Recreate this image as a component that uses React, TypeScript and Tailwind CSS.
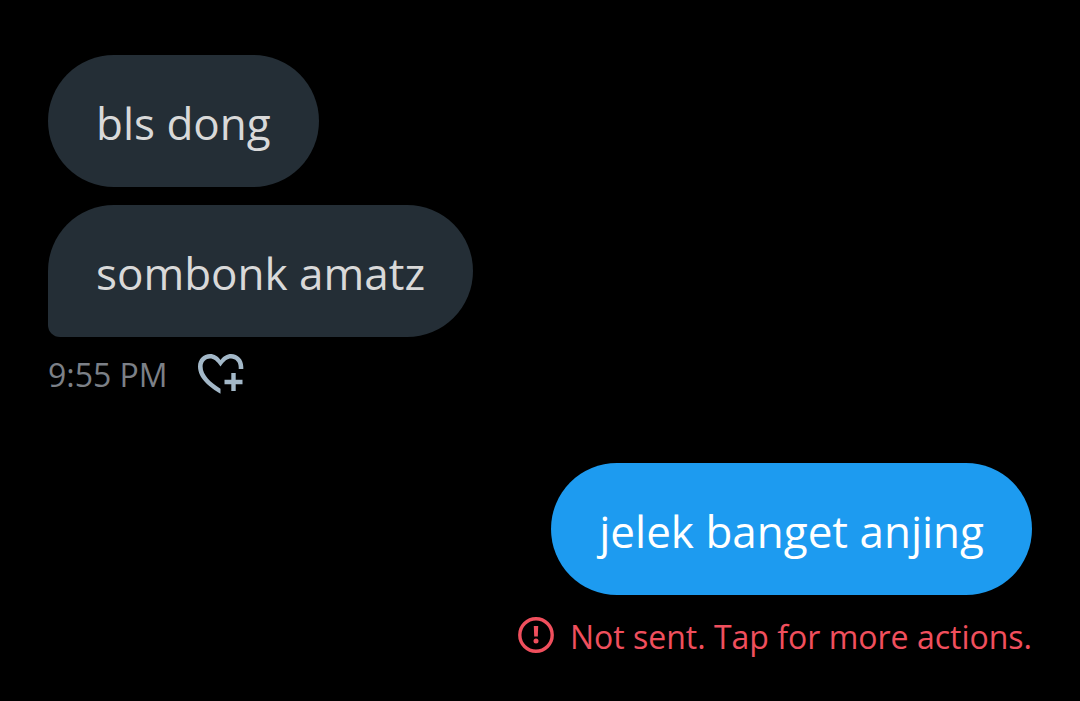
interface Message {
  id: string
  text: string
  tail?: boolean
}

const received: Message[] = [
  { id: 'r1', text: 'bls dong' },
  { id: 'r2', text: 'sombonk amatz', tail: true },
]

function HeartPlusIcon() {
  return (
    <svg className="h-[42px] w-[48px]" viewBox="0 1 48 42" fill="currentColor" aria-hidden="true">
      <path d="M24.500 41.700C14 35.500 2 26.500 2 14.500C2 7 7.500 2 14 2C18.500 2 22 4.500 24.500 8C27 4.500 31 2 35 2C42 2 47.300 7.500 47.300 15V17H42.700V15C42.700 10 39.500 6.500 35 6.500C31.500 6.500 28.500 8.800 24.500 14.500C20.500 8.800 17.500 6.500 14 6.500C10 6.500 6.600 9.500 6.600 14.500C6.600 23 14.500 30.500 24.500 36.700Z" />
      <path d="M37.500 21V39M28.500 30H46.500" stroke="currentColor" strokeWidth="4.400" />
    </svg>
  )
}

function AlertIcon() {
  return (
    <svg className="mt-1 h-9 w-9 shrink-0" viewBox="0 0 36 36" fill="none" aria-hidden="true">
      <circle cx="18" cy="18" r="16.200" stroke="currentColor" strokeWidth="3.400" />
      <path d="M15.800 9h4.400l-.4 10.500h-3.600z" fill="currentColor" />
      <circle cx="18" cy="24" r="2.500" fill="currentColor" />
    </svg>
  )
}

function ReceivedBubble({ text, tail }: Message) {
  return (
    <div
      className={`rounded-[66px] bg-[#242e36] px-12 pt-[38px] pb-[34px] text-[#d9d9d9] ${
        tail ? 'rounded-bl-xl' : ''
      }`}
    >
      <p className="text-[44px] leading-[60px]">{text}</p>
    </div>
  )
}

export default function App() {
  return (
    <main className="flex min-h-screen flex-col bg-black px-12 pt-[55px] font-['Open_Sans',sans-serif]">
      <section className="flex flex-col items-start gap-[18px]">
        {received.map((message) => (
          <ReceivedBubble key={message.id} {...message} />
        ))}
      </section>
      <div className="mt-4 flex items-start gap-7 text-[#7c8087]">
        <time className="text-[32px] leading-[44px]">9:55 PM</time>
        <button type="button" aria-label="Add reaction" className="text-[#a3b8c8]">
          <HeartPlusIcon />
        </button>
      </div>
      <section className="mt-[66px] flex flex-col items-end">
        <div className="rounded-[66px] bg-[#1d9bf0] px-12 pt-[38px] pb-[34px] text-white">
          <p className="text-[44px] leading-[60px]">jelek banget anjing</p>
        </div>
        <button type="button" className="mt-[18px] flex items-start gap-4 text-[#f04f5d]">
          <AlertIcon />
          <span className="text-[32px] leading-[48px]">Not sent. Tap for more actions.</span>
        </button>
      </section>
    </main>
  )
}
